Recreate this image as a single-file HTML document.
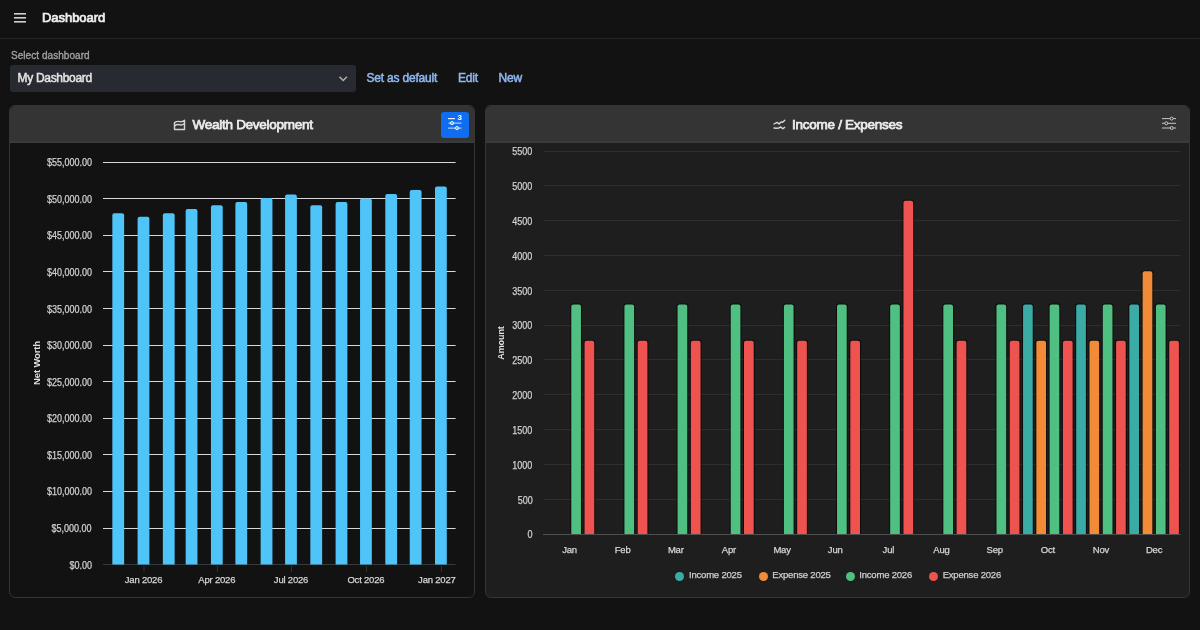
<!DOCTYPE html>
<html><head><meta charset="utf-8"><style>
*{margin:0;padding:0;box-sizing:border-box}
body{will-change:transform}
html,body{width:1200px;height:630px;overflow:hidden;background:#121212;font-family:"Liberation Sans",sans-serif;color:#e6e6e6}
.abs{position:absolute}
.topbar{position:absolute;left:0;top:0;width:1200px;height:39px;border-bottom:1px solid #262626;background:#121212}
.title{position:absolute;left:42px;top:10px;font-size:13px;font-weight:normal;-webkit-text-stroke:0.7px #f0f0f0;color:#f0f0f0;letter-spacing:-0.05px;line-height:15px}
.sel-label{position:absolute;left:11px;top:50px;font-size:10px;font-weight:normal;-webkit-text-stroke:0.35px #a0a0a0;color:#a0a0a0;line-height:12px;letter-spacing:0.05px}
.select{position:absolute;left:10px;top:65px;width:346px;height:27px;background:#272a31;border-radius:3px}
.select .val{position:absolute;left:7.5px;top:6px;font-size:12px;font-weight:normal;-webkit-text-stroke:0.5px #e3e3e3;color:#e3e3e3;line-height:14px;letter-spacing:-0.3px}
.link{position:absolute;top:71px;font-size:12px;font-weight:normal;-webkit-text-stroke:0.5px #90b8f0;color:#90b8f0;line-height:14px;letter-spacing:-0.2px}
.panel{position:absolute;top:105px;height:493px;border:1px solid #353535;border-radius:6px;overflow:hidden}
.phead{position:absolute;left:0;top:0;right:0;height:37px;background:#343434;border-bottom:2px solid #3a3a3a}
.ptitle{position:absolute;top:116.5px;font-size:13.5px;font-weight:normal;-webkit-text-stroke:0.75px #ececec;color:#ececec;line-height:15px;letter-spacing:-0.27px;white-space:nowrap}
.yl{position:absolute;font-size:10px;letter-spacing:0px;transform:scaleX(0.9);transform-origin:100% 50%;color:#d0d0d0;-webkit-text-stroke:0.25px #d0d0d0;text-align:right;line-height:12px;white-space:nowrap}
.xl{position:absolute;font-size:9.5px;letter-spacing:-0.2px;-webkit-text-stroke:0.25px #d6d6d6;color:#d6d6d6;text-align:center;width:80px;line-height:12px;white-space:nowrap}
.leg{position:absolute;top:569.2px;font-size:9.5px;letter-spacing:-0.2px;-webkit-text-stroke:0.25px #cfcfcf;color:#cfcfcf;line-height:12px;white-space:nowrap}
.dot{position:absolute;top:571.5px;width:9px;height:9px;border-radius:50%}
</style></head><body>
<div class="topbar"></div>
<svg class="abs" style="left:0;top:0" width="40" height="39">
<rect x="14" y="13" width="12" height="1.6" fill="#cfcfcf"/>
<rect x="14" y="17" width="12" height="1.6" fill="#cfcfcf"/>
<rect x="14" y="21" width="12" height="1.6" fill="#cfcfcf"/>
</svg>
<div class="title">Dashboard</div>
<div class="sel-label">Select dashboard</div>
<div class="select"><div class="val">My Dashboard</div>
<svg class="abs" style="left:327px;top:9px" width="12" height="10"><path d="M2.5,2.8 L6.2,6.5 L9.9,2.8" fill="none" stroke="#b0b0b0" stroke-width="1.5"/></svg>
</div>
<div class="link" style="left:366.5px">Set as default</div>
<div class="link" style="left:458px">Edit</div>
<div class="link" style="left:498.5px">New</div>

<div class="panel" style="left:9px;width:466px;background:#121212">
<div class="phead"></div>
</div>
<div class="panel" style="left:485px;width:705px;background:#1e1e1e">
<div class="phead"></div>
</div>
<!-- left header -->
<svg class="abs" style="left:0;top:0" width="200" height="140" viewBox="0 0 200 140">
<path d="M174.5,122.6 C176.5,121.3 178.5,121.2 180,121.6 C181.5,122 182.5,121.8 184.5,120.2 V129.4 H174.5 Z" fill="none" stroke="#d4d4d4" stroke-width="1.45" stroke-linejoin="round"/>
<path d="M174.5,125.8 C176.5,124.5 178.5,124.3 180,124.8 C181.5,125.2 182.5,125 184.5,123.6" fill="none" stroke="#d4d4d4" stroke-width="1.45"/>
</svg>
<div class="ptitle" style="left:192.5px">Wealth Development</div>
<div class="abs" style="left:441px;top:112px;width:28px;height:26px;background:#0f6ef0;border-radius:3px"></div>
<svg class="abs" style="left:441px;top:112px" width="28" height="26">
<rect x="7" y="6" width="7" height="1.2" fill="#e8f0fe"/>
<rect x="7.5" y="10.6" width="13" height="1" fill="#cfe0fb"/>
<circle cx="11" cy="11.1" r="1.6" fill="none" stroke="#e8f0fe" stroke-width="1"/>
<rect x="7" y="15.6" width="13.5" height="1" fill="#cfe0fb"/>
<circle cx="16" cy="16.1" r="1.6" fill="none" stroke="#e8f0fe" stroke-width="1"/>
<text x="16.6" y="7.9" font-size="8" font-weight="bold" fill="#ffffff" font-family="Liberation Sans">3</text>
</svg>
<!-- right header -->
<svg class="abs" style="left:760px;top:110px" width="40" height="30" viewBox="760 110 40 30">
<polyline points="774,124 777,122.4 779.1,123.9 781,121.9 782.7,122.2 784.8,120.3" fill="none" stroke="#d8d8d8" stroke-width="1.4" stroke-linejoin="round" stroke-linecap="round"/>
<polyline points="774,128 776.5,128.2 778.6,128.1 780.8,127 782.8,128.7 784.6,127.4" fill="none" stroke="#d8d8d8" stroke-width="1.4" stroke-linejoin="round" stroke-linecap="round"/>
</svg>
<div class="ptitle" style="left:792px">Income / Expenses</div>
<svg class="abs" style="left:1160px;top:114px" width="18" height="18">
<rect x="2" y="4.1" width="14" height="1" fill="#c8c8c8"/>
<circle cx="11.7" cy="4.6" r="1.5" fill="#333" stroke="#c8c8c8" stroke-width="1"/>
<rect x="2" y="8.8" width="14" height="1" fill="#c8c8c8"/>
<circle cx="6.3" cy="9.3" r="1.5" fill="#333" stroke="#c8c8c8" stroke-width="1"/>
<rect x="2" y="13.5" width="14" height="1" fill="#c8c8c8"/>
<circle cx="11.7" cy="14" r="1.5" fill="#333" stroke="#c8c8c8" stroke-width="1"/>
</svg>

<svg class="abs" style="left:0;top:0" width="1200" height="630">
<rect x="103" y="528" width="352.6" height="1" fill="#d9d9d9"/><rect x="103" y="491" width="352.6" height="1" fill="#d9d9d9"/><rect x="103" y="454" width="352.6" height="1" fill="#d9d9d9"/><rect x="103" y="418" width="352.6" height="1" fill="#d9d9d9"/><rect x="103" y="381" width="352.6" height="1" fill="#d9d9d9"/><rect x="103" y="345" width="352.6" height="1" fill="#d9d9d9"/><rect x="103" y="308" width="352.6" height="1" fill="#d9d9d9"/><rect x="103" y="271" width="352.6" height="1" fill="#d9d9d9"/><rect x="103" y="235" width="352.6" height="1" fill="#d9d9d9"/><rect x="103" y="198" width="352.6" height="1" fill="#d9d9d9"/><rect x="103" y="162" width="352.6" height="1" fill="#d9d9d9"/><rect x="103" y="564" width="352.6" height="1" fill="#3a3a3a"/><path d="M112.34,564.50 V215.30 Q112.34,213.30 114.34,213.30 H122.14 Q124.14,213.30 124.14,215.30 V564.50 Z" fill="#4fc4f9"/><path d="M137.60,564.50 V218.75 Q137.60,216.75 139.60,216.75 H147.40 Q149.40,216.75 149.40,218.75 V564.50 Z" fill="#4fc4f9"/><path d="M162.86,564.50 V215.30 Q162.86,213.30 164.86,213.30 H172.66 Q174.66,213.30 174.66,215.30 V564.50 Z" fill="#4fc4f9"/><path d="M185.67,564.50 V210.90 Q185.67,208.90 187.67,208.90 H195.47 Q197.47,208.90 197.47,210.90 V564.50 Z" fill="#4fc4f9"/><path d="M210.93,564.50 V207.20 Q210.93,205.20 212.93,205.20 H220.73 Q222.73,205.20 222.73,207.20 V564.50 Z" fill="#4fc4f9"/><path d="M235.38,564.50 V204.00 Q235.38,202.00 237.38,202.00 H245.18 Q247.18,202.00 247.18,204.00 V564.50 Z" fill="#4fc4f9"/><path d="M260.63,564.50 V200.00 Q260.63,198.00 262.63,198.00 H270.43 Q272.43,198.00 272.43,200.00 V564.50 Z" fill="#4fc4f9"/><path d="M285.08,564.50 V196.50 Q285.08,194.50 287.08,194.50 H294.88 Q296.88,194.50 296.88,196.50 V564.50 Z" fill="#4fc4f9"/><path d="M310.34,564.50 V207.35 Q310.34,205.35 312.34,205.35 H320.14 Q322.14,205.35 322.14,207.35 V564.50 Z" fill="#4fc4f9"/><path d="M335.60,564.50 V204.00 Q335.60,202.00 337.60,202.00 H345.40 Q347.40,202.00 347.40,204.00 V564.50 Z" fill="#4fc4f9"/><path d="M360.04,564.50 V200.40 Q360.04,198.40 362.04,198.40 H369.84 Q371.84,198.40 371.84,200.40 V564.50 Z" fill="#4fc4f9"/><path d="M385.30,564.50 V196.00 Q385.30,194.00 387.30,194.00 H395.10 Q397.10,194.00 397.10,196.00 V564.50 Z" fill="#4fc4f9"/><path d="M409.74,564.50 V192.10 Q409.74,190.10 411.74,190.10 H419.54 Q421.54,190.10 421.54,192.10 V564.50 Z" fill="#4fc4f9"/><path d="M435.00,564.50 V188.60 Q435.00,186.60 437.00,186.60 H444.80 Q446.80,186.60 446.80,188.60 V564.50 Z" fill="#4fc4f9"/><rect x="143.50" y="566" width="1" height="6" fill="#333333"/><rect x="216.83" y="566" width="1" height="6" fill="#333333"/><rect x="290.98" y="566" width="1" height="6" fill="#333333"/><rect x="365.94" y="566" width="1" height="6" fill="#333333"/><rect x="440.90" y="566" width="1" height="6" fill="#333333"/>
<defs><clipPath id="rc"><rect x="540" y="140" width="645" height="394.5"/></clipPath></defs><g clip-path="url(#rc)"><rect x="544" y="499" width="636.7" height="1" fill="#2e2e2e"/><rect x="544" y="464" width="636.7" height="1" fill="#2e2e2e"/><rect x="544" y="429" width="636.7" height="1" fill="#2e2e2e"/><rect x="544" y="394" width="636.7" height="1" fill="#2e2e2e"/><rect x="544" y="359" width="636.7" height="1" fill="#2e2e2e"/><rect x="544" y="325" width="636.7" height="1" fill="#2e2e2e"/><rect x="544" y="290" width="636.7" height="1" fill="#2e2e2e"/><rect x="544" y="255" width="636.7" height="1" fill="#2e2e2e"/><rect x="544" y="220" width="636.7" height="1" fill="#2e2e2e"/><rect x="544" y="185" width="636.7" height="1" fill="#2e2e2e"/><rect x="544" y="151" width="636.7" height="1" fill="#2e2e2e"/><path d="M571.27,534.30 V306.55 Q571.27,304.55 573.27,304.55 H578.97 Q580.97,304.55 580.97,306.55 V534.30 Z" fill="none" stroke="rgba(0,0,0,0.6)" stroke-width="2"/><path d="M571.27,534.30 V306.55 Q571.27,304.55 573.27,304.55 H578.97 Q580.97,304.55 580.97,306.55 V534.30 Z" fill="#50bf82"/><path d="M584.56,534.30 V342.76 Q584.56,340.76 586.56,340.76 H592.26 Q594.26,340.76 594.26,342.76 V534.30 Z" fill="none" stroke="rgba(0,0,0,0.6)" stroke-width="2"/><path d="M584.56,534.30 V342.76 Q584.56,340.76 586.56,340.76 H592.26 Q594.26,340.76 594.26,342.76 V534.30 Z" fill="#ef5350"/><path d="M624.42,534.30 V306.55 Q624.42,304.55 626.42,304.55 H632.12 Q634.12,304.55 634.12,306.55 V534.30 Z" fill="none" stroke="rgba(0,0,0,0.6)" stroke-width="2"/><path d="M624.42,534.30 V306.55 Q624.42,304.55 626.42,304.55 H632.12 Q634.12,304.55 634.12,306.55 V534.30 Z" fill="#50bf82"/><path d="M637.71,534.30 V342.76 Q637.71,340.76 639.71,340.76 H645.41 Q647.41,340.76 647.41,342.76 V534.30 Z" fill="none" stroke="rgba(0,0,0,0.6)" stroke-width="2"/><path d="M637.71,534.30 V342.76 Q637.71,340.76 639.71,340.76 H645.41 Q647.41,340.76 647.41,342.76 V534.30 Z" fill="#ef5350"/><path d="M677.57,534.30 V306.55 Q677.57,304.55 679.57,304.55 H685.27 Q687.27,304.55 687.27,306.55 V534.30 Z" fill="none" stroke="rgba(0,0,0,0.6)" stroke-width="2"/><path d="M677.57,534.30 V306.55 Q677.57,304.55 679.57,304.55 H685.27 Q687.27,304.55 687.27,306.55 V534.30 Z" fill="#50bf82"/><path d="M690.86,534.30 V342.76 Q690.86,340.76 692.86,340.76 H698.56 Q700.56,340.76 700.56,342.76 V534.30 Z" fill="none" stroke="rgba(0,0,0,0.6)" stroke-width="2"/><path d="M690.86,534.30 V342.76 Q690.86,340.76 692.86,340.76 H698.56 Q700.56,340.76 700.56,342.76 V534.30 Z" fill="#ef5350"/><path d="M730.72,534.30 V306.55 Q730.72,304.55 732.72,304.55 H738.42 Q740.42,304.55 740.42,306.55 V534.30 Z" fill="none" stroke="rgba(0,0,0,0.6)" stroke-width="2"/><path d="M730.72,534.30 V306.55 Q730.72,304.55 732.72,304.55 H738.42 Q740.42,304.55 740.42,306.55 V534.30 Z" fill="#50bf82"/><path d="M744.01,534.30 V342.76 Q744.01,340.76 746.01,340.76 H751.71 Q753.71,340.76 753.71,342.76 V534.30 Z" fill="none" stroke="rgba(0,0,0,0.6)" stroke-width="2"/><path d="M744.01,534.30 V342.76 Q744.01,340.76 746.01,340.76 H751.71 Q753.71,340.76 753.71,342.76 V534.30 Z" fill="#ef5350"/><path d="M783.87,534.30 V306.55 Q783.87,304.55 785.87,304.55 H791.57 Q793.57,304.55 793.57,306.55 V534.30 Z" fill="none" stroke="rgba(0,0,0,0.6)" stroke-width="2"/><path d="M783.87,534.30 V306.55 Q783.87,304.55 785.87,304.55 H791.57 Q793.57,304.55 793.57,306.55 V534.30 Z" fill="#50bf82"/><path d="M797.16,534.30 V342.76 Q797.16,340.76 799.16,340.76 H804.86 Q806.86,340.76 806.86,342.76 V534.30 Z" fill="none" stroke="rgba(0,0,0,0.6)" stroke-width="2"/><path d="M797.16,534.30 V342.76 Q797.16,340.76 799.16,340.76 H804.86 Q806.86,340.76 806.86,342.76 V534.30 Z" fill="#ef5350"/><path d="M837.02,534.30 V306.55 Q837.02,304.55 839.02,304.55 H844.72 Q846.72,304.55 846.72,306.55 V534.30 Z" fill="none" stroke="rgba(0,0,0,0.6)" stroke-width="2"/><path d="M837.02,534.30 V306.55 Q837.02,304.55 839.02,304.55 H844.72 Q846.72,304.55 846.72,306.55 V534.30 Z" fill="#50bf82"/><path d="M850.31,534.30 V342.76 Q850.31,340.76 852.31,340.76 H858.01 Q860.01,340.76 860.01,342.76 V534.30 Z" fill="none" stroke="rgba(0,0,0,0.6)" stroke-width="2"/><path d="M850.31,534.30 V342.76 Q850.31,340.76 852.31,340.76 H858.01 Q860.01,340.76 860.01,342.76 V534.30 Z" fill="#ef5350"/><path d="M890.17,534.30 V306.55 Q890.17,304.55 892.17,304.55 H897.87 Q899.87,304.55 899.87,306.55 V534.30 Z" fill="none" stroke="rgba(0,0,0,0.6)" stroke-width="2"/><path d="M890.17,534.30 V306.55 Q890.17,304.55 892.17,304.55 H897.87 Q899.87,304.55 899.87,306.55 V534.30 Z" fill="#50bf82"/><path d="M903.46,534.30 V202.82 Q903.46,200.82 905.46,200.82 H911.16 Q913.16,200.82 913.16,202.82 V534.30 Z" fill="none" stroke="rgba(0,0,0,0.6)" stroke-width="2"/><path d="M903.46,534.30 V202.82 Q903.46,200.82 905.46,200.82 H911.16 Q913.16,200.82 913.16,202.82 V534.30 Z" fill="#ef5350"/><path d="M943.32,534.30 V306.55 Q943.32,304.55 945.32,304.55 H951.02 Q953.02,304.55 953.02,306.55 V534.30 Z" fill="none" stroke="rgba(0,0,0,0.6)" stroke-width="2"/><path d="M943.32,534.30 V306.55 Q943.32,304.55 945.32,304.55 H951.02 Q953.02,304.55 953.02,306.55 V534.30 Z" fill="#50bf82"/><path d="M956.61,534.30 V342.76 Q956.61,340.76 958.61,340.76 H964.31 Q966.31,340.76 966.31,342.76 V534.30 Z" fill="none" stroke="rgba(0,0,0,0.6)" stroke-width="2"/><path d="M956.61,534.30 V342.76 Q956.61,340.76 958.61,340.76 H964.31 Q966.31,340.76 966.31,342.76 V534.30 Z" fill="#ef5350"/><path d="M996.47,534.30 V306.55 Q996.47,304.55 998.47,304.55 H1004.17 Q1006.17,304.55 1006.17,306.55 V534.30 Z" fill="none" stroke="rgba(0,0,0,0.6)" stroke-width="2"/><path d="M996.47,534.30 V306.55 Q996.47,304.55 998.47,304.55 H1004.17 Q1006.17,304.55 1006.17,306.55 V534.30 Z" fill="#50bf82"/><path d="M1009.76,534.30 V342.76 Q1009.76,340.76 1011.76,340.76 H1017.46 Q1019.46,340.76 1019.46,342.76 V534.30 Z" fill="none" stroke="rgba(0,0,0,0.6)" stroke-width="2"/><path d="M1009.76,534.30 V342.76 Q1009.76,340.76 1011.76,340.76 H1017.46 Q1019.46,340.76 1019.46,342.76 V534.30 Z" fill="#ef5350"/><path d="M1023.04,534.30 V306.55 Q1023.04,304.55 1025.04,304.55 H1030.74 Q1032.74,304.55 1032.74,306.55 V534.30 Z" fill="none" stroke="rgba(0,0,0,0.6)" stroke-width="2"/><path d="M1023.04,534.30 V306.55 Q1023.04,304.55 1025.04,304.55 H1030.74 Q1032.74,304.55 1032.74,306.55 V534.30 Z" fill="#3aaca5"/><path d="M1036.33,534.30 V342.76 Q1036.33,340.76 1038.33,340.76 H1044.03 Q1046.03,340.76 1046.03,342.76 V534.30 Z" fill="none" stroke="rgba(0,0,0,0.6)" stroke-width="2"/><path d="M1036.33,534.30 V342.76 Q1036.33,340.76 1038.33,340.76 H1044.03 Q1046.03,340.76 1046.03,342.76 V534.30 Z" fill="#f28b38"/><path d="M1049.62,534.30 V306.55 Q1049.62,304.55 1051.62,304.55 H1057.32 Q1059.32,304.55 1059.32,306.55 V534.30 Z" fill="none" stroke="rgba(0,0,0,0.6)" stroke-width="2"/><path d="M1049.62,534.30 V306.55 Q1049.62,304.55 1051.62,304.55 H1057.32 Q1059.32,304.55 1059.32,306.55 V534.30 Z" fill="#50bf82"/><path d="M1062.91,534.30 V342.76 Q1062.91,340.76 1064.91,340.76 H1070.61 Q1072.61,340.76 1072.61,342.76 V534.30 Z" fill="none" stroke="rgba(0,0,0,0.6)" stroke-width="2"/><path d="M1062.91,534.30 V342.76 Q1062.91,340.76 1064.91,340.76 H1070.61 Q1072.61,340.76 1072.61,342.76 V534.30 Z" fill="#ef5350"/><path d="M1076.19,534.30 V306.55 Q1076.19,304.55 1078.19,304.55 H1083.89 Q1085.89,304.55 1085.89,306.55 V534.30 Z" fill="none" stroke="rgba(0,0,0,0.6)" stroke-width="2"/><path d="M1076.19,534.30 V306.55 Q1076.19,304.55 1078.19,304.55 H1083.89 Q1085.89,304.55 1085.89,306.55 V534.30 Z" fill="#3aaca5"/><path d="M1089.48,534.30 V342.76 Q1089.48,340.76 1091.48,340.76 H1097.18 Q1099.18,340.76 1099.18,342.76 V534.30 Z" fill="none" stroke="rgba(0,0,0,0.6)" stroke-width="2"/><path d="M1089.48,534.30 V342.76 Q1089.48,340.76 1091.48,340.76 H1097.18 Q1099.18,340.76 1099.18,342.76 V534.30 Z" fill="#f28b38"/><path d="M1102.77,534.30 V306.55 Q1102.77,304.55 1104.77,304.55 H1110.47 Q1112.47,304.55 1112.47,306.55 V534.30 Z" fill="none" stroke="rgba(0,0,0,0.6)" stroke-width="2"/><path d="M1102.77,534.30 V306.55 Q1102.77,304.55 1104.77,304.55 H1110.47 Q1112.47,304.55 1112.47,306.55 V534.30 Z" fill="#50bf82"/><path d="M1116.06,534.30 V342.76 Q1116.06,340.76 1118.06,340.76 H1123.76 Q1125.76,340.76 1125.76,342.76 V534.30 Z" fill="none" stroke="rgba(0,0,0,0.6)" stroke-width="2"/><path d="M1116.06,534.30 V342.76 Q1116.06,340.76 1118.06,340.76 H1123.76 Q1125.76,340.76 1125.76,342.76 V534.30 Z" fill="#ef5350"/><path d="M1129.34,534.30 V306.55 Q1129.34,304.55 1131.34,304.55 H1137.04 Q1139.04,304.55 1139.04,306.55 V534.30 Z" fill="none" stroke="rgba(0,0,0,0.6)" stroke-width="2"/><path d="M1129.34,534.30 V306.55 Q1129.34,304.55 1131.34,304.55 H1137.04 Q1139.04,304.55 1139.04,306.55 V534.30 Z" fill="#3aaca5"/><path d="M1142.63,534.30 V273.14 Q1142.63,271.14 1144.63,271.14 H1150.33 Q1152.33,271.14 1152.33,273.14 V534.30 Z" fill="none" stroke="rgba(0,0,0,0.6)" stroke-width="2"/><path d="M1142.63,534.30 V273.14 Q1142.63,271.14 1144.63,271.14 H1150.33 Q1152.33,271.14 1152.33,273.14 V534.30 Z" fill="#f28b38"/><path d="M1155.92,534.30 V306.55 Q1155.92,304.55 1157.92,304.55 H1163.62 Q1165.62,304.55 1165.62,306.55 V534.30 Z" fill="none" stroke="rgba(0,0,0,0.6)" stroke-width="2"/><path d="M1155.92,534.30 V306.55 Q1155.92,304.55 1157.92,304.55 H1163.62 Q1165.62,304.55 1165.62,306.55 V534.30 Z" fill="#50bf82"/><path d="M1169.21,534.30 V342.76 Q1169.21,340.76 1171.21,340.76 H1176.91 Q1178.91,340.76 1178.91,342.76 V534.30 Z" fill="none" stroke="rgba(0,0,0,0.6)" stroke-width="2"/><path d="M1169.21,534.30 V342.76 Q1169.21,340.76 1171.21,340.76 H1176.91 Q1178.91,340.76 1178.91,342.76 V534.30 Z" fill="#ef5350"/></g><rect x="543" y="534" width="637.7" height="1" fill="#4f4f4f"/>
</svg>
<div class="yl" style="top:559.5px;right:1108.25px">$0.00</div><div class="yl" style="top:522.9px;right:1108.25px">$5,000.00</div><div class="yl" style="top:486.4px;right:1108.25px">$10,000.00</div><div class="yl" style="top:449.8px;right:1108.25px">$15,000.00</div><div class="yl" style="top:413.2px;right:1108.25px">$20,000.00</div><div class="yl" style="top:376.7px;right:1108.25px">$25,000.00</div><div class="yl" style="top:340.1px;right:1108.25px">$30,000.00</div><div class="yl" style="top:303.6px;right:1108.25px">$35,000.00</div><div class="yl" style="top:267.0px;right:1108.25px">$40,000.00</div><div class="yl" style="top:230.4px;right:1108.25px">$45,000.00</div><div class="yl" style="top:193.9px;right:1108.25px">$50,000.00</div><div class="yl" style="top:157.3px;right:1108.25px">$55,000.00</div><div class="xl" style="top:574px;left:103.5px">Jan 2026</div><div class="xl" style="top:574px;left:176.8px">Apr 2026</div><div class="xl" style="top:574px;left:251.0px">Jul 2026</div><div class="xl" style="top:574px;left:325.9px">Oct 2026</div><div class="xl" style="top:574px;left:375.6px;text-align:right">Jan 2027</div>
<div class="yl" style="top:529.3px;right:667.7px">0</div><div class="yl" style="top:494.5px;right:667.7px">500</div><div class="yl" style="top:459.7px;right:667.7px">1000</div><div class="yl" style="top:424.9px;right:667.7px">1500</div><div class="yl" style="top:390.1px;right:667.7px">2000</div><div class="yl" style="top:355.2px;right:667.7px">2500</div><div class="yl" style="top:320.4px;right:667.7px">3000</div><div class="yl" style="top:285.6px;right:667.7px">3500</div><div class="yl" style="top:250.8px;right:667.7px">4000</div><div class="yl" style="top:216.0px;right:667.7px">4500</div><div class="yl" style="top:181.2px;right:667.7px">5000</div><div class="yl" style="top:146.4px;right:667.7px">5500</div><div class="xl" style="top:543.5px;left:539.5px;width:60px">Jan</div><div class="xl" style="top:543.5px;left:592.6px;width:60px">Feb</div><div class="xl" style="top:543.5px;left:645.8px;width:60px">Mar</div><div class="xl" style="top:543.5px;left:698.9px;width:60px">Apr</div><div class="xl" style="top:543.5px;left:752.1px;width:60px">May</div><div class="xl" style="top:543.5px;left:805.2px;width:60px">Jun</div><div class="xl" style="top:543.5px;left:858.4px;width:60px">Jul</div><div class="xl" style="top:543.5px;left:911.5px;width:60px">Aug</div><div class="xl" style="top:543.5px;left:964.7px;width:60px">Sep</div><div class="xl" style="top:543.5px;left:1017.8px;width:60px">Oct</div><div class="xl" style="top:543.5px;left:1071.0px;width:60px">Nov</div><div class="xl" style="top:543.5px;left:1124.1px;width:60px">Dec</div>
<div class="abs" style="left:6.5px;top:357px;width:60px;text-align:center;font-size:9.5px;font-weight:bold;color:#e0e0e0;line-height:12px;letter-spacing:-0.15px;transform:rotate(-90deg);white-space:nowrap">Net Worth</div>
<div class="abs" style="left:471px;top:336.5px;width:60px;text-align:center;font-size:9px;font-weight:bold;color:#e0e0e0;line-height:12px;letter-spacing:-0.1px;transform:rotate(-90deg);white-space:nowrap">Amount</div>

<div class="dot" style="left:675px;background:#3aaca5"></div><div class="leg" style="left:689px">Income 2025</div>
<div class="dot" style="left:758.5px;background:#f28b38"></div><div class="leg" style="left:772.3px">Expense 2025</div>
<div class="dot" style="left:845.5px;background:#50bf82"></div><div class="leg" style="left:859.3px">Income 2026</div>
<div class="dot" style="left:929px;background:#ef5350"></div><div class="leg" style="left:942.7px">Expense 2026</div>
</body></html>
